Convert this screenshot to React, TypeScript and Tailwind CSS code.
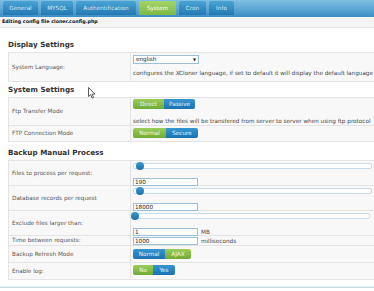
import React from 'react';

const tabs = [
  { label: 'General', w: 'w-[35px]' },
  { label: 'MYSQL', w: 'w-[32px]' },
  { label: 'Authentification', w: 'w-[60px]' },
  { label: 'System', w: 'w-[37px]', active: true },
  { label: 'Cron', w: 'w-[27px]' },
  { label: 'Info', w: 'w-[25px]' },
];

function Toggle({
  items,
}: {
  items: { label: string; w: string; green?: boolean }[];
}) {
  return (
    <div className="flex">
      {items.map((it, i) => (
        <div
          key={it.label}
          className={`${it.w} h-[10px] flex items-center justify-center text-[5.7px] text-white/90 ${
            it.green
              ? 'bg-gradient-to-b from-[#9ccd5c] to-[#6faa32]'
              : 'bg-gradient-to-b from-[#3696d0] to-[#1a72b0]'
          } ${i === 0 ? 'rounded-l-[2px]' : 'rounded-r-[2px]'}`}
        >
          {it.label}
        </div>
      ))}
    </div>
  );
}

function Slider({ left }: { left: string }) {
  return (
    <div className="relative h-[6px] w-[239px] rounded-[2px] border border-[#c6dced] bg-white">
      <div
        className={`absolute top-[-2px] ${left} h-[8px] w-[8px] rounded-full bg-gradient-to-b from-[#3b9ad4] to-[#1b6fa8]`}
      />
    </div>
  );
}

function Field({ value }: { value: string }) {
  return (
    <div className="h-[8px] w-[65px] border border-[#9cbfd8] bg-white text-[5.7px] leading-[6px] pl-[1px] text-[#222]">
      {value}
    </div>
  );
}

function Row({
  label,
  h,
  children,
  last,
}: {
  label: string;
  h: string;
  children: React.ReactNode;
  last?: boolean;
}) {
  return (
    <div className={`flex ${h} ${last ? '' : 'border-b border-[#e4e4e4]'}`}>
      <div className="w-[122px] shrink-0 border-r border-[#e4e4e4] flex items-center pl-[3px] text-[5.7px] text-[#555]">
        {label}
      </div>
      <div className="flex-1 pl-[2px] flex flex-col">{children}</div>
    </div>
  );
}

function Heading({ children, mt }: { children: React.ReactNode; mt: string }) {
  return (
    <div className={`${mt} ml-[8px] h-[12px] leading-[12px] text-[7.2px] font-bold text-[#333]`}>
      {children}
    </div>
  );
}

export default function App() {
  return (
    <div
      className="relative w-[374px] h-[291px] overflow-hidden bg-white"
      style={{ fontFamily: '"DejaVu Sans", Verdana, sans-serif' }}
    >
      {/* Tab bar */}
      <div className="h-[17px] bg-gradient-to-b from-[#7fc0e2] to-[#3a8fc4] flex gap-[3px] pl-[3px] pt-[1px]">
        {tabs.map((t) => (
          <div
            key={t.label}
            className={`${t.w} h-[14px] rounded-t-[2px] flex items-center justify-center text-[5.7px] ${
              t.active
                ? 'bg-gradient-to-b from-[#a6d468] to-[#7cb842] text-white'
                : 'bg-gradient-to-b from-[#4aa3d4] to-[#2379b2] text-[#d6ecf8]'
            }`}
          >
            {t.label}
          </div>
        ))}
      </div>

      <div className="h-[11px] bg-[#f4f4f4] border-b border-[#e6e6e6] pl-[2px] flex items-center text-[4.8px] font-bold text-[#111]">
        Editing config file cloner.config.php
      </div>

      {/* Display Settings */}
      <Heading mt="mt-[11px]">Display Settings</Heading>
      <div className="ml-[8px] mt-[1px] w-[380px] border border-[#e4e4e4] bg-[#f8f8f8]">
        <Row label="System Language:" h="h-[28px]" last>
          <div className="mt-[2px] h-[9px] w-[66px] border border-[#9cbfd8] bg-white flex items-center justify-between px-[2px] text-[5.7px] text-[#222]">
            <span>english</span>
            <span className="text-[4px]">▼</span>
          </div>
          <div className="mt-[5px] text-[5.7px] text-[#444] whitespace-nowrap">
            configures the XCloner language, if set to default it will display the default language of the browser
          </div>
        </Row>
      </div>

      {/* System Settings */}
      <Heading mt="mt-[2px]">System Settings</Heading>
      <div className="ml-[8px] mt-[1px] w-[380px] border border-[#e4e4e4] bg-[#f8f8f8]">
        <Row label="Ftp Transfer Mode" h="h-[28px]">
          <div className="mt-[1px]">
            <Toggle
              items={[
                { label: 'Direct', w: 'w-[31px]', green: true },
                { label: 'Passive', w: 'w-[31px]' },
              ]}
            />
          </div>
          <div className="mt-[8px] text-[5.7px] text-[#444] whitespace-nowrap">
            select how the files will be transfered from server to server when using ftp protocol
          </div>
        </Row>
        <Row label="FTP Connection Mode" h="h-[15px]" last>
          <div className="mt-[2px]">
            <Toggle
              items={[
                { label: 'Normal', w: 'w-[33px]', green: true },
                { label: 'Secure', w: 'w-[32px]' },
              ]}
            />
          </div>
        </Row>
      </div>

      {/* Backup Manual Process */}
      <Heading mt="mt-[5px]">Backup Manual Process</Heading>
      <div className="ml-[8px] mt-[1px] w-[380px] border border-[#e4e4e4] bg-[#f8f8f8]">
        <Row label="Files to process per request:" h="h-[25px]">
          <div className="mt-[2px]">
            <Slider left="left-[2px]" />
          </div>
          <div className="mt-[9px]">
            <Field value="190" />
          </div>
        </Row>
        <Row label="Database records per request" h="h-[25px]">
          <div className="mt-[2px]">
            <Slider left="left-[2px]" />
          </div>
          <div className="mt-[9px]">
            <Field value="18000" />
          </div>
        </Row>
        <Row label="Exclude files larger than:" h="h-[25px]">
          <div className="mt-[2px] -ml-[2px]">
            <Slider left="left-[-1px]" />
          </div>
          <div className="mt-[9px] flex items-center gap-[3px] text-[5.7px] text-[#444]">
            <Field value="1" />
            <span>MB</span>
          </div>
        </Row>
        <Row label="Time between requests:" h="h-[10px]">
          <div className="mt-[1px] flex items-center gap-[3px] text-[5.7px] text-[#444]">
            <Field value="1000" />
            <span>milliseconds</span>
          </div>
        </Row>
        <Row label="Backup Refresh Mode" h="h-[17px]">
          <div className="mt-[3px]">
            <Toggle
              items={[
                { label: 'Normal', w: 'w-[32px]' },
                { label: 'AJAX', w: 'w-[26px]', green: true },
              ]}
            />
          </div>
        </Row>
        <Row label="Enable log:" h="h-[16px]" last>
          <div className="mt-[2px]">
            <Toggle
              items={[
                { label: 'No', w: 'w-[20px]', green: true },
                { label: 'Yes', w: 'w-[22px]' },
              ]}
            />
          </div>
        </Row>
      </div>

      <div className="mt-[6px] h-[2px] bg-[#c9d9e6] border-t border-[#e8f1f8]" />

      {/* mouse cursor */}
      <svg
        className="absolute left-[88px] top-[87px]"
        width="8"
        height="12"
        viewBox="0 0 8 12"
      >
        <path d="M0.5 0.5 L0.5 9.5 L2.7 7.6 L4.2 11 L5.6 10.4 L4.1 7.1 L7 7.1 Z" fill="#fff" stroke="#333" strokeWidth="0.8" />
      </svg>
    </div>
  );
}
